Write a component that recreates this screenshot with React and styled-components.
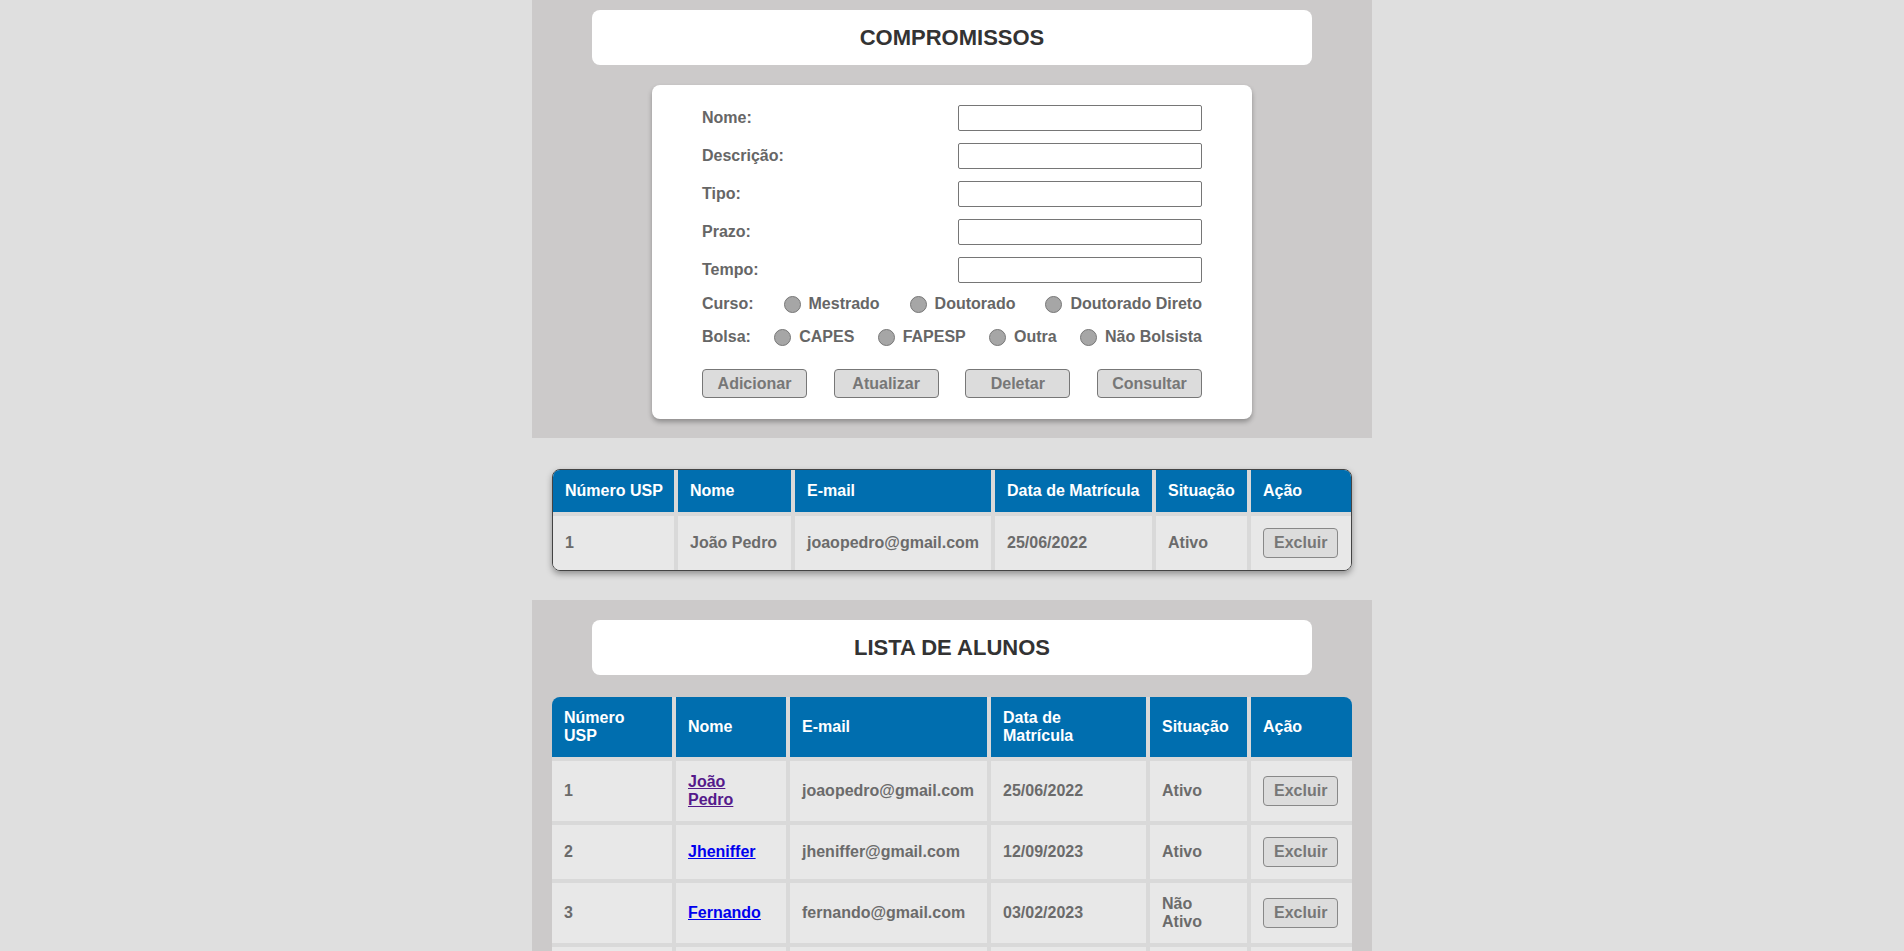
import React from 'react'
import styled, { createGlobalStyle } from 'styled-components'

const GlobalStyle = createGlobalStyle`
body {
  margin: 0;
  background: #dfdfdf;
  font-family: "Liberation Sans", Arial, sans-serif;
}
* {
  box-sizing: border-box;
}
`

const Page = styled.div`
display: flex;
flex-direction: column;
align-items: center;
`

const Section = styled.section`
width: 840px;
background: #cccaca;
display: flex;
flex-direction: column;
align-items: center;
padding: ${props => props.top}px 0 ${props => props.bottom}px;
`

const TitleCard = styled.div`
width: 720px;
height: 55px;
background: #fff;
border-radius: 8px;
display: flex;
align-items: center;
justify-content: center;
`

const Title = styled.h2`
margin: 0;
font-size: 22px;
font-weight: 700;
color: #333;
`

const FormCard = styled.form`
width: 600px;
margin-top: 20px;
background: #fff;
border-radius: 8px;
padding: 20px 50px 21px;
box-shadow: 0 3px 5px rgba(0, 0, 0, 0.3);
`

const FieldRow = styled.div`
display: flex;
justify-content: space-between;
align-items: center;
height: 26px;
margin-bottom: 12px;
`

const Label = styled.label`
font-size: 16px;
font-weight: 700;
color: #666;
`

const TextInput = styled.input`
width: 244px;
height: 26px;
border: 1px solid #767676;
border-radius: 2px;
background: #fff;
`

const RadioRow = styled.div`
display: flex;
justify-content: space-between;
align-items: center;
height: 18px;
margin-top: ${props => props.gap}px;
`

const Option = styled.label`
display: flex;
align-items: center;
gap: 8px;
font-size: 16px;
font-weight: 700;
color: #666;
`

const Radio = styled.input`
appearance: none;
margin: 0;
width: 17px;
height: 17px;
border-radius: 50%;
background: #a6a6a6;
border: 1px solid #777;
`

const ButtonRow = styled.div`
display: flex;
justify-content: space-between;
margin-top: 23px;
`

const Button = styled.button`
width: 105px;
height: 29px;
background: #dcdcdc;
border: 1px solid #777;
border-radius: 4px;
color: #777;
font-family: inherit;
font-size: 16px;
font-weight: 700;
`

const TableWrap = styled.div`
width: 800px;
margin: ${props => props.margin};
border-radius: ${props => props.radius};
overflow: hidden;
border: ${props => props.framed ? '1px solid #444' : 'none'};
box-shadow: ${props => props.framed ? '0 3px 6px rgba(0, 0, 0, 0.35)' : 'none'};
`

const Table = styled.table`
width: 100%;
border-collapse: separate;
border-spacing: 0;
table-layout: fixed;
font-size: 16px;
font-weight: 700;
white-space: ${props => props.nowrap ? 'nowrap' : 'normal'};
`

const Th = styled.th`
width: ${props => props.w}px;
background: #006eaf;
color: #fff;
text-align: left;
padding: 12px;
line-height: 18px;
border-right: 4px solid #d9d9d9;
border-bottom: 4px solid #d9d9d9;
&:last-child {
  border-right: none;
}
`

const Td = styled.td`
background: #e8e8e8;
color: #6b6b6b;
padding: 12px;
line-height: 18px;
vertical-align: middle;
border-right: 4px solid #d9d9d9;
border-bottom: 4px solid #d9d9d9;
&:last-child {
  border-right: none;
}
tr:last-child > & {
  border-bottom: ${props => props.open ? '4px solid #d9d9d9' : 'none'};
}
`

const NameLink = styled.a`
color: ${props => props.visited ? '#551a8b' : '#0000ee'};
text-decoration: underline;
`

const SmallButton = styled.button`
padding: 5px 10px;
background: #dcdcdc;
border: 1px solid #888;
border-radius: 4px;
color: #777;
font-family: inherit;
font-size: 16px;
font-weight: 700;
line-height: 18px;
`

const fields = ['Nome:', 'Descrição:', 'Tipo:', 'Prazo:', 'Tempo:']

const alunos = [
  { id: 1, nome: 'João Pedro', email: 'joaopedro@gmail.com', data: '25/06/2022', situacao: 'Ativo', visited: true },
  { id: 2, nome: 'Jheniffer', email: 'jheniffer@gmail.com', data: '12/09/2023', situacao: 'Ativo' },
  { id: 3, nome: 'Fernando', email: 'fernando@gmail.com', data: '03/02/2023', situacao: 'Não Ativo' },
  { id: 4, nome: 'Mariana', email: 'mariana@gmail.com', data: '15/03/2023', situacao: 'Ativo' },
]

const headers = ['Número USP', 'Nome', 'E-mail', 'Data de Matrícula', 'Situação', 'Ação']

const App = () => {
  return (
    <Page>
      <GlobalStyle />
      <Section top={10} bottom={19}>
        <TitleCard>
          <Title>COMPROMISSOS</Title>
        </TitleCard>
        <FormCard onSubmit={e => e.preventDefault()}>
          {fields.map(f =>
            <FieldRow key={f}>
              <Label>{f}</Label>
              <TextInput type="text" />
            </FieldRow>
          )}
          <RadioRow gap={1}>
            <Label>Curso:</Label>
            <Option><Radio type="radio" name="curso" />Mestrado</Option>
            <Option><Radio type="radio" name="curso" />Doutorado</Option>
            <Option><Radio type="radio" name="curso" />Doutorado Direto</Option>
          </RadioRow>
          <RadioRow gap={15}>
            <Label>Bolsa:</Label>
            <Option><Radio type="radio" name="bolsa" />CAPES</Option>
            <Option><Radio type="radio" name="bolsa" />FAPESP</Option>
            <Option><Radio type="radio" name="bolsa" />Outra</Option>
            <Option><Radio type="radio" name="bolsa" />Não Bolsista</Option>
          </RadioRow>
          <ButtonRow>
            <Button type="button">Adicionar</Button>
            <Button type="button">Atualizar</Button>
            <Button type="button">Deletar</Button>
            <Button type="button">Consultar</Button>
          </ButtonRow>
        </FormCard>
      </Section>

      <TableWrap framed radius="8px" margin="31px 0 29px">
        <Table nowrap>
          <thead>
            <tr>
              {headers.map((h, i) =>
                <Th key={h} w={[125, 117, 200, 161, 95, 100][i]}>{h}</Th>
              )}
            </tr>
          </thead>
          <tbody>
            <tr>
              <Td>1</Td>
              <Td>João Pedro</Td>
              <Td>joaopedro@gmail.com</Td>
              <Td>25/06/2022</Td>
              <Td>Ativo</Td>
              <Td><SmallButton type="button">Excluir</SmallButton></Td>
            </tr>
          </tbody>
        </Table>
      </TableWrap>

      <Section top={20} bottom={20}>
        <TitleCard>
          <Title>LISTA DE ALUNOS</Title>
        </TitleCard>
        <TableWrap radius="8px 8px 0 0" margin="22px 0 0">
          <Table>
            <thead>
              <tr>
                {headers.map((h, i) =>
                  <Th key={h} w={[124, 114, 201, 159, 101, 101][i]}>{h}</Th>
                )}
              </tr>
            </thead>
            <tbody>
              {alunos.map(a =>
                <tr key={a.id}>
                  <Td open>{a.id}</Td>
                  <Td open><NameLink href="#" visited={a.visited}>{a.nome}</NameLink></Td>
                  <Td open>{a.email}</Td>
                  <Td open>{a.data}</Td>
                  <Td open>{a.situacao}</Td>
                  <Td open><SmallButton type="button">Excluir</SmallButton></Td>
                </tr>
              )}
            </tbody>
          </Table>
        </TableWrap>
      </Section>
    </Page>
  )
}

export default App
